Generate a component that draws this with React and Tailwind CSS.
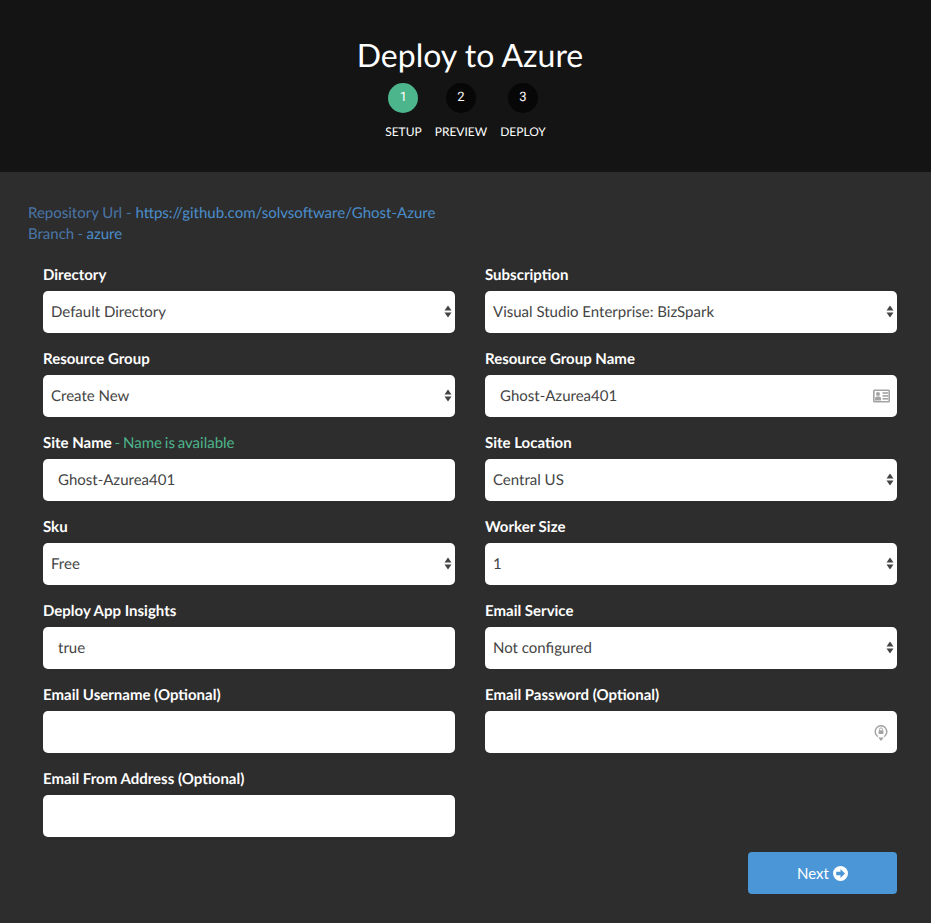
import React from 'react';

const steps = [
  { num: '1', label: 'SETUP', active: true },
  { num: '2', label: 'PREVIEW' },
  { num: '3', label: 'DEPLOY' },
];

function Arrows() {
  return (
    <svg className="absolute right-[3px] top-[14px]" width="8" height="13" viewBox="0 0 8 13">
      <path d="M4 0.5 L7.5 5.5 H0.5 Z" fill="#444" />
      <path d="M4 12.5 L7.5 7.5 H0.5 Z" fill="#444" />
    </svg>
  );
}

function CardIcon() {
  return (
    <svg className="absolute right-[7px] top-[14px]" width="17" height="14" viewBox="0 0 17 14">
      <rect x="0" y="0.5" width="17" height="13" rx="1.5" fill="#a3a3a3" />
      <rect x="1.6" y="2" width="13.8" height="10" fill="#fff" />
      <circle cx="5" cy="5" r="2" fill="#a3a3a3" />
      <path d="M2 11.5 V9.5 C2 8.2 3 7.6 5 7.6 C7 7.6 8 8.2 8 9.5 V11.5 Z" fill="#a3a3a3" />
      <rect x="9.5" y="3.2" width="5.5" height="1.6" fill="#a3a3a3" />
      <rect x="9.5" y="6.1" width="5.5" height="1.6" fill="#a3a3a3" />
      <rect x="9.5" y="9" width="5.5" height="1.6" fill="#a3a3a3" />
    </svg>
  );
}

function LockIcon() {
  return (
    <svg className="absolute right-[9px] top-[13px]" width="14" height="17" viewBox="0 0 14 17">
      <path d="M4 12.6 A5.8 5.8 0 1 1 10 12.6" fill="none" stroke="#a3a3a3" strokeWidth="1.5" />
      <path d="M7 17 L4.2 13.4 H9.8 Z" fill="#a3a3a3" />
      <rect x="4.6" y="6.2" width="4.8" height="3.8" rx="0.5" fill="#a3a3a3" />
      <path d="M5.5 6.2 V5.4 A1.5 1.5 0 0 1 8.5 5.4 V6.2" fill="none" stroke="#a3a3a3" strokeWidth="0.9" />
    </svg>
  );
}

function Field({ label, note, value, select, icon }) {
  return (
    <div className="h-[84px]">
      <div className="h-[25px] text-[15px] font-bold leading-[25px] text-white">
        {label}
        {note && <span className="font-normal text-[#4db58c] [word-spacing:-1px]"> - {note}</span>}
      </div>
      <div className={`relative mt-[3px] flex h-[42px] items-center rounded-[5px] bg-white text-[15px] text-[#444] ${select ? 'pl-2' : 'pl-[15px]'}`}>
        {value}
        {select && <Arrows />}
        {icon === 'card' && <CardIcon />}
        {icon === 'lock' && <LockIcon />}
      </div>
    </div>
  );
}

export default function App() {
  return (
    <div className="min-h-[923px] bg-[#2d2d2d] font-['Lato',sans-serif] [text-rendering:geometricPrecision]">
      <header className="h-[172px] bg-[#141414] pt-[33px] text-center text-white">
        <h1 className="pl-[9px] text-[32px] leading-[44px]">Deploy to Azure</h1>
        <div className="mt-[6px] flex justify-center gap-[13px]">
          {steps.map((s) => (
            <div key={s.num} className="flex flex-col items-center">
              <div className={`flex h-[30px] w-[30px] items-center justify-center rounded-full font-['Roboto',sans-serif] text-[13px] ${s.active ? 'bg-[#4db58c]' : 'bg-[#070707]'}`}>
                {s.num}
              </div>
              <div className="mt-[10px] text-xs leading-[18px]">{s.label}</div>
            </div>
          ))}
        </div>
      </header>

      <main className="px-[28px] pt-[31px]">
        <div className="text-[15px] leading-[21px] text-[#4a76a8]">
          <div>Repository Url - <a className="text-[#4b8dcb]">https://github.com/solvsoftware/Ghost-Azure</a></div>
          <div className="[word-spacing:-0.5px]">Branch - <a className="text-[#4b8dcb]">azure</a></div>
        </div>

        <div className="mt-[18px] grid grid-cols-2 gap-x-[30px] pl-[15px] pr-[6px]">
          <Field label="Directory" value="Default Directory" select />
          <Field label="Subscription" value="Visual Studio Enterprise: BizSpark" select />
          <Field label="Resource Group" value="Create New" select />
          <Field label="Resource Group Name" value="Ghost-Azurea401" icon="card" />
          <Field label="Site Name" note="Name is available" value="Ghost-Azurea401" />
          <Field label="Site Location" value="Central US" select />
          <Field label="Sku" value="Free" select />
          <Field label="Worker Size" value="1" select />
          <Field label="Deploy App Insights" value="true" />
          <Field label="Email Service" value="Not configured" select />
          <Field label="Email Username (Optional)" />
          <Field label="Email Password (Optional)" icon="lock" />
          <Field label="Email From Address (Optional)" />
        </div>

        <div className="mt-[1px] flex justify-end pr-[6px]">
          <button className="flex h-[42px] w-[149px] items-center justify-center gap-1 rounded-[4px] bg-[#4b96d6] text-[15px] text-white">
            Next
            <svg width="15" height="15" viewBox="0 0 15 15">
              <circle cx="7.5" cy="7.5" r="7.5" fill="#fff" />
              <path d="M7.5 3 L12 7.5 L7.5 12 V9.3 H3.2 V5.7 H7.5 Z" fill="#4b96d6" />
            </svg>
          </button>
        </div>
      </main>
    </div>
  );
}
